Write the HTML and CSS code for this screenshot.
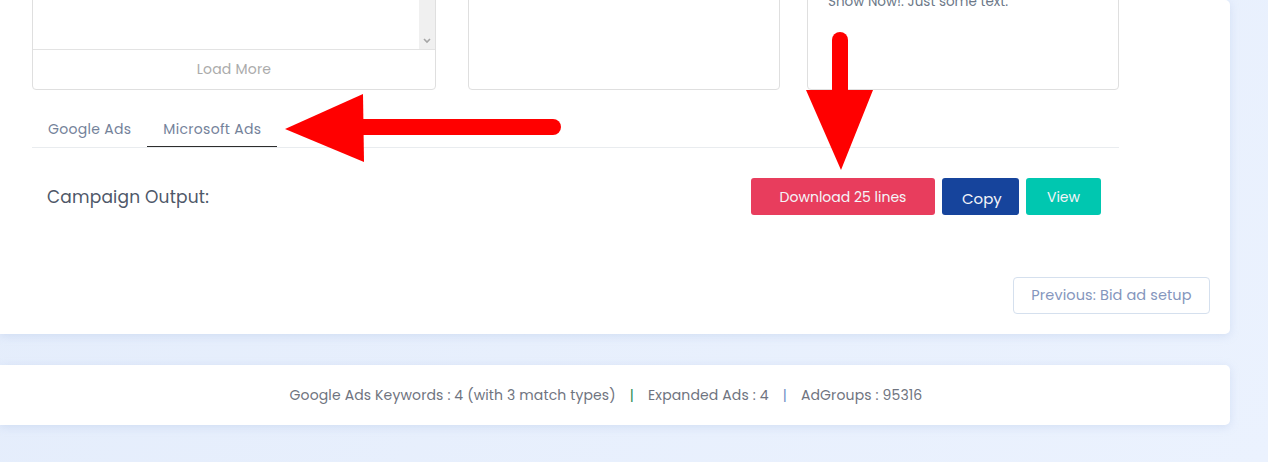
FILE: index.html
```html
<!DOCTYPE html>
<html lang="en">
<head>
<meta charset="utf-8">
<title>Campaign Output</title>
<link rel="stylesheet" href="styles.css">
</head>
<body>
<div class="page">
  <section class="main-card">
    <div class="content">
      <div class="cards">
        <div class="box box-list">
          <div class="list-scroll">
            <div class="list-body"></div>
            <div class="scrollbar">
              <svg class="chev" width="8" height="6" viewBox="0 0 8 6"><path d="M1 1 L4 4 L7 1" fill="none" stroke="#a6a6a6" stroke-width="1.6"/></svg>
            </div>
          </div>
          <div class="load-more">Load More</div>
        </div>
        <div class="box box-mid"></div>
        <div class="box box-text"><p class="box-copy">Show Now!. Just some text.</p></div>
      </div>
      <nav class="tabs">
        <a class="tab">Google Ads</a>
        <a class="tab active">Microsoft Ads</a>
      </nav>
      <div class="output-row">
        <span class="output-label">Campaign Output:</span>
        <div class="actions">
          <button class="btn btn-download">Download 25 lines</button>
          <button class="btn btn-copy">Copy</button>
          <button class="btn btn-view">View</button>
        </div>
      </div>
    </div>
    <div class="footer-nav">
      <button class="btn-prev">Previous: Bid ad setup</button>
    </div>
  </section>
  <footer class="stats">
    <span>Google Ads Keywords : 4 (with 3 match types)</span>
    <span class="sep sep-green">|</span>
    <span>Expanded Ads : 4</span>
    <span class="sep sep-blue">|</span>
    <span>AdGroups : 95316</span>
  </footer>
  <svg class="annotations" width="1268" height="462" viewBox="0 0 1268 462">
    <line x1="553" y1="127" x2="355" y2="127" stroke="#ff0000" stroke-width="16" stroke-linecap="round"/>
    <polygon points="285,129 363,94 364,162" fill="#ff0000"/>
    <line x1="840" y1="40" x2="840" y2="100" stroke="#ff0000" stroke-width="16" stroke-linecap="round"/>
    <polygon points="806,90 873,90 841,170" fill="#ff0000"/>
  </svg>
</div>
</body>
</html>
```

FILE: styles.css
```css
* { box-sizing: border-box; }
html, body { margin: 0; padding: 0; }
body {
  background: linear-gradient(135deg, #e3ecfb 0%, #ebf2fe 100%);
  font-family: "Poppins", "Inter", "Noto Sans", sans-serif;
  width: 1268px;
  height: 462px;
  overflow: hidden;
}
.page {
  position: relative;
  display: flex;
  flex-direction: column;
  width: 1268px;
  height: 462px;
}
.main-card {
  width: 1230px;
  background: #fff;
  border-radius: 0 5px 5px 0;
  box-shadow: 0 2px 8px rgba(170, 190, 225, 0.35);
  padding: 0 20px 20px 32px;
  display: flex;
  flex-direction: column;
}
.content {
  width: 1087px;
  display: flex;
  flex-direction: column;
}
.cards {
  margin-top: -60px;
  display: flex;
  height: 150px;
}
.box {
  border: 1px solid #dfdfdf;
  border-radius: 4px;
  background: #fff;
  height: 150px;
}
.box-list {
  width: 404px;
  display: flex;
  flex-direction: column;
  overflow: hidden;
}
.list-scroll {
  height: 109px;
  display: flex;
  border-bottom: 1px solid #e3e3e3;
}
.list-body { flex: 1; }
.scrollbar {
  width: 16px;
  background: #f0f0f0;
  display: flex;
  align-items: flex-end;
  justify-content: center;
  padding-bottom: 5px;
}
.load-more {
  flex: 1;
  display: flex;
  align-items: center;
  justify-content: center;
  font-size: 14px;
  color: #ababab;
  letter-spacing: 0.2px;
}
.box-mid { width: 312px; margin-left: 32px; }
.box-text { width: 312px; margin-left: 27px; padding: 51px 20px 0 20px; }
.box-copy {
  margin: 0;
  font-size: 13.5px;
  line-height: 20px;
  color: #6c7888;
}
.tabs {
  margin-top: 21px;
  display: flex;
  border-bottom: 1px solid #e9ecef;
}
.tab {
  display: block;
  padding: 8px 16px 7px;
  line-height: 20px;
  font-size: 14px;
  letter-spacing: 0.3px;
  color: #74829a;
  border-bottom: 1px solid transparent;
}
.tab.active { border-bottom-color: #2d2d2d; }
.output-row {
  margin-top: 30px;
  display: flex;
  align-items: center;
  justify-content: space-between;
  padding: 0 18px 0 15px;
}
.output-label {
  font-size: 17px;
  color: #4e5768;
  letter-spacing: 0.2px;
}
.actions { display: flex; gap: 7px; }
.btn {
  height: 37px;
  border: 0;
  border-radius: 3px;
  font-family: inherit;
  font-size: 14px;
  color: #f4f4f8;
  padding: 2px 20px 0;
}
.btn-download { background: #e83d5d; width: 184px; }
.btn-copy { background: #16449c; width: 77px; font-size: 15px; padding-top: 4px; }
.btn-view { background: #00c7b0; width: 75px; }
.footer-nav {
  margin-top: 62px;
  display: flex;
  justify-content: flex-end;
}
.btn-prev {
  height: 37px;
  width: 197px;
  background: #fff;
  border: 1px solid #d5e0ee;
  border-radius: 4px;
  font-family: inherit;
  font-size: 14.5px;
  letter-spacing: 0.1px;
  color: #8596bd;
}
.stats {
  margin-top: 31px;
  width: 1230px;
  height: 60px;
  background: #fff;
  border-radius: 0 5px 5px 0;
  box-shadow: 0 2px 8px rgba(170, 190, 225, 0.35);
  display: flex;
  align-items: center;
  justify-content: center;
  padding-right: 18px;
  font-size: 14px;
  letter-spacing: 0.13px;
  color: #6f7480;
}
.sep { margin: 0 14px; }
.sep-green { color: #2e8b57; }
.sep-blue { color: #6f8fc6; }
.annotations {
  position: absolute;
  left: 0;
  top: 0;
  pointer-events: none;
}
```
